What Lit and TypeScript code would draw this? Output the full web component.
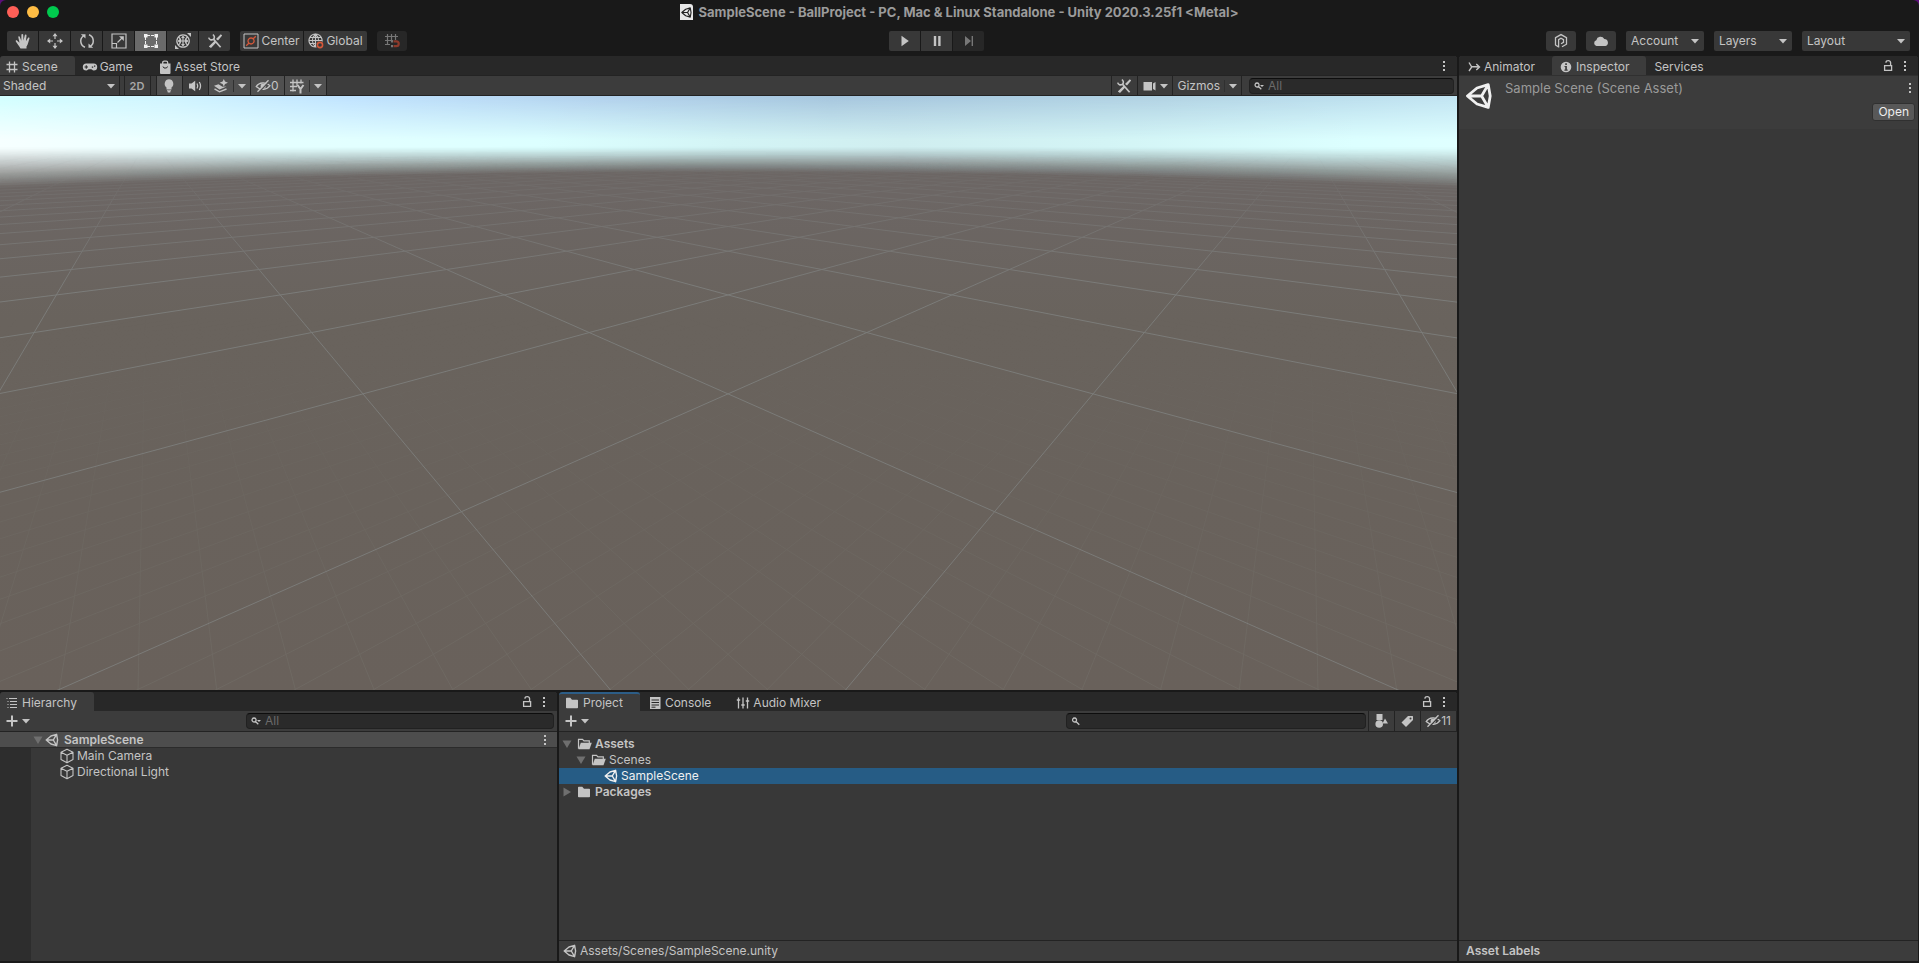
import { html, css, svg, nothing, LitElement, TemplateResult } from 'lit'
import { customElement, property } from 'lit/decorators.js'
import { classMap } from 'lit/directives/class-map.js'

const icons: Record<string, TemplateResult> = {
    hand: svg`<path d="M5.5 15.5C4 12.5 2 10.500.8 8.400c-.4-.9.8-1.400 1.500-.7L4.500 9.800 3.300 4.300c-.2-1.200 1.300-1.500 1.600-.3L6.300 7.800 6.400 1.800c0-1.200 1.700-1.200 1.800 0L8.500 7.600 9.800 2.300c.3-1.100 1.800-.8 1.700.4L10.900 8.200 12.900 5c.6-1 1.900-.3 1.500.7C13.400 8.500 13.200 11 11.500 13.500V15.500z"/>`,
    move: svg`<path fill="none" stroke="currentColor" stroke-width="1.2" d="M8 1.5V6M8 10v4.5M1.5 8H6M10 8h4.5"/>
        <path d="M8 0 10.5 3.2h-5zM8 16 5.5 12.8h5zM0 8 3.2 5.5v5zM16 8 12.8 10.5v-5z"/>`,
    rotate: svg`<path fill="none" stroke="currentColor" stroke-width="1.5" d="M6 14.2A6.5 6.5 0 0 1 4.5 2.8M10 1.8A6.5 6.5 0 0 1 11.5 13.2"/>
        <path d="M1.8 1.2H6.5V5.5zM14.2 14.8H9.5V10.5z"/>`,
    scale: svg`<path fill="none" stroke="currentColor" stroke-width="1.2" d="M1 1h14v14H1zM1 10.5h4.5V15M6.5 9.5 11.5 4.5"/>
        <path d="M8 3.2h4.8V8z"/>`,
    rect: svg`<path fill="none" stroke="currentColor" stroke-dasharray="3 1" d="M2.5 4v8M13.5 4v8M4 2.5h8M4 13.5h8"/>
        <path d="M1 1h3.5v3.5H1zM11.5 1H15v3.5h-3.5zM1 11.5h3.5V15H1zM11.5 11.5H15V15h-3.5z"/>`,
    transform: svg`<path fill="none" stroke="currentColor" stroke-width="1.2" d="M8 1.8a6.2 6.2 0 1 0 .1 0zM3.5 3.8Q8 8 3.5 12.2M12.5 3.8Q8 8 12.5 12.2M8 3.5v9M3.5 8h9"/>
        <path d="M8 2.5 10 5H6zM8 13.5 6 11h4zM2.5 8 5 6v4zM13.5 8 11 10V6zM12 0h4v4zM0 12v4h4z"/>`,
    tools: svg`<path fill="none" stroke="currentColor" stroke-width="1.7" d="M6 5.6 13.6 14.2"/>
        <path fill="none" stroke="currentColor" stroke-width="1.6" d="M5.8 1.6a3 3 0 0 1 1 4.4M1.700 4.600a3 3 0 0 0 4.500 1.800"/>
        <path d="M13.8 1.2 15.2 2.6 11 7.4 9 6zM7.600 7.800 9.400 9.200 4 14.900 1.800 13.400z"/>`,
    pivot: svg`<path fill="none" stroke="currentColor" d="M1 1h14v14H1z"/>
        <path fill="none" stroke="#d4583a" stroke-width="1.3" d="M8 5a3 3 0 1 0 .1 0zM10.2 5.8 12.8 3.2M5.8 10.2 3.2 12.8"/>`,
    globe: svg`<path fill="none" stroke="currentColor" stroke-width="1.2" d="M7.5 1a6.5 6.5 0 1 0 .1 0zM7.5 1C3.5 5 3.5 10 7.5 14M7.5 1C11.5 5 11.5 10 7.5 14M7.5 1v13M1 7.5h13M2 4.5h11M2 10.5h8"/>
        <circle cx="12" cy="12" r="4" fill="#383838"/><circle cx="12" cy="12" r="2.6" fill="none" stroke="#d4583a" stroke-width="1.6"/>`,
    snap: svg`<path fill="none" stroke="currentColor" stroke-width="1.2" d="M3.5 1v11M7.5 1v8M11.5 1v6M1 3.5h13M1 7.5h8M1 11.5h5"/>
        <path fill="none" stroke="#8d3a2b" stroke-width="2.2" d="M9.5 8.3h2.8a2.4 2.4 0 0 1 0 4.9H9.5"/>
        <path d="M7 7.2h2v2.2H7zM7 12.1h2v2.2H7z"/>`,
    play: svg`<path d="M4.5 2.8v10.4L11.8 8z"/>`,
    pause: svg`<path d="M4.8 3h2.4v10H4.8zM9.2 3h2.4v10H9.2z"/>`,
    step: svg`<path d="M4 3v10l6-5zM10.6 3H12v10h-1.4z"/>`,
    collab: svg`<path fill="none" stroke="currentColor" stroke-width="1.3" d="M5.6 14 2.5 12V4.700L8 1.600l5.500 3.100v6.500L9 13.800M5.600 14.500V6.600L8 5.200l2.500 1.400v2.800L8 10.800"/>`,
    cloud: svg`<path d="M3.500 13A3 3 0 0 1 3.300 7.200 4.300 4.300 0 0 1 11.300 6 3.600 3.600 0 0 1 12.500 13z"/>`,
    hash: svg`<path fill="none" stroke="currentColor" stroke-width="1.3" d="M5.5 2.5v11M10.5 2.5v11M2.5 5.5h11M2.5 10.5h11"/>`,
    game: svg`<path d="M4.3 4.5h7.4a3.5 3.5 0 0 1 0 7C10.2 11.5 10 10.3 9.3 10.3H6.7C6 10.3 5.8 11.5 4.3 11.5a3.5 3.5 0 0 1 0-7z"/>
        <path fill="#282828" d="M2.5 7.4h1.2V6.2h1.1V7.4H6v1.1H4.8v1.2H3.7V8.5H2.5zM9.8 7.4h1.4v1.4H9.8zM12 6.4h1.3v1.3H12z"/>`,
    bag: svg`<path d="M3 4.5h10.5V14q0 1-1 1H4q-1 0-1-1z"/>
        <path fill="none" stroke="currentColor" stroke-width="1.3" d="M5.7 5V3.7q0-1.5 1.5-1.5h2q1.5 0 1.5 1.5V5"/>
        <path fill="none" stroke="#282828" d="M6 7.5 7 9h2.5l1-1.5"/>`,
    bulb: svg`<path d="M8 1.3a4.5 4.5 0 0 1 2.500 8.100V11.500h-5V9.400A4.500 4.500 0 0 1 8 1.300zM6 12.300h4v1H9.300v1.200H6.700v-1.200H6z"/>`,
    audio: svg`<path d="M2 5.5h2.5L8.2 2.8v10.4L4.5 10.5H2z"/>
        <path fill="none" stroke="currentColor" stroke-width="1.3" d="M10 5.5q1.5 2.5 0 5M12.300 4q2.500 4 0 8"/>`,
    effects: svg`<path d="M1 7.8 5.500 6.200 9.500 8.800 13.500 8.600 6.500 11.600z"/>
        <path fill="none" stroke="currentColor" stroke-width="1.4" d="M1.500 10.800 6.500 13.800 13.500 11"/>
        <path d="M10.800 1 12 3.600 15 4.800 12 6 10.800 8.600 9.600 6 6.600 4.800 9.600 3.600z"/>`,
    eye: svg`<path fill="none" stroke="currentColor" stroke-width="1.3" d="M1.2 8.500C4 4.200 11 3.600 15 7.600 12 12 5.500 12.600 1.200 8.500z"/>
        <circle cx="8.2" cy="8.1" r="2.6"/>
        <path fill="none" stroke="var(--iconBack, #3c3c3c)" stroke-width="1.5" d="M3.500 14.500 14.500 3.200"/>
        <path fill="none" stroke="currentColor" stroke-width="1.3" d="M2.500 13.800 13.500 2.200"/>`,
    gridY: svg`<path fill="none" stroke="currentColor" stroke-width="1.3" d="M4 1.5v12M8 1.5v6M12 1.5v4M1 4.5h13.5M1 8.5h7M1 12.5h6"/>
        <path fill="none" stroke="currentColor" stroke-width="2" d="M8.5 7 11.5 11 14.500 7M11.500 11v4.500"/>`,
    camera: svg`<path d="M1.5 4H10v8.5H1.5zM13.5 4v8.500L11 11V5.500z"/>`,
    search: svg`<path fill="none" stroke="currentColor" stroke-width="1.3" d="M5.500 5a2 2 0 1 0 .1 0zM7 8.500 10.300 11.800"/>`,
    searchMenu: svg`<path fill="none" stroke="currentColor" stroke-width="1.3" d="M5 5a2 2 0 1 0 .1 0zM6.500 8.500 9.300 11.300"/>
        <path d="M8 7h4L10 9z"/>`,
    dots: svg`<path d="M7 3h2v2H7zM7 7h2v2H7zM7 11h2v2H7z"/>`,
    lock: svg`<path fill="none" stroke="currentColor" stroke-width="1.3" d="M3.600 7.600h7v4.800h-7zM5 4.800V4.300Q5 2.600 7.200 2.600T9.600 4.600V7.600"/>`,
    arrow: svg`<path d="M4 6h8l-4 4.500z"/>`,
    fold: svg`<path d="M3.500 4.500h9L8 12z"/>`,
    foldClosed: svg`<path d="M4.500 3.500v9L12 8z"/>`,
    plus: svg`<path d="M7 2.500h2V7h4.500v2H9v4.500H7V9H2.500V7H7z"/>`,
    list: svg`<path fill="none" stroke="currentColor" stroke-width="1.100" d="M2.500 3.500h1M5 3.500h8M3.500 6.500h1M6 6.500h7M3.500 9.500h1M6 9.500h7M3.500 12.500h1M6 12.500h7"/>`,
    logo: svg`<path fill="none" stroke="currentColor" stroke-width="1.400" stroke-linejoin="round" d="M2.200 8 7 4 12.600 2.300 13.600 8 12.600 13.700 7 12zM2.200 8H9.300L12.600 2.300M9.300 8 12.600 13.700"/>`,
    cube: svg`<path fill="none" stroke="currentColor" stroke-width="1.100" stroke-linejoin="round" d="M8 1.200 14 4.200v7.300L8 14.800 2 11.500V4.200zM2 4.200 8 7.300l6-3.100M8 7.300v7.500"/>`,
    folder: svg`<path d="M1 3.500q0-.8.800-.8H5.300L7 4.700h5.200q.8 0 .8.800V12.500q0 .8-.8.800H1.800q-.8 0-.8-.8z"/>`,
    folderOpen: svg`<path d="M3.800 6.800H14.800L12.500 13.300H1.500z"/>
        <path fill="none" stroke="currentColor" stroke-width="1.200" d="M1.500 12.800V3.300H5.500L7 4.800h5.300V7"/>`,
    console: svg`<path d="M3 2h10.5v12H3z"/><path fill="none" stroke="#282828" d="M4.500 5h7.500M4.500 7.500h7.500M4.500 10h7.500M4.500 12.200h4"/>`,
    mixer: svg`<path fill="none" stroke="currentColor" stroke-width="1.300" d="M3.500 2.500v11M8 2.500v11M12.500 2.500v11M1.800 5h3.400M6.300 10h3.400M10.800 6h3.400"/>`,
    shapes: svg`<path d="M3.500 1H9.500V7H3.500zM12 5.500l3 5H9.500z"/><circle cx="6.200" cy="11" r="3.800"/>`,
    tag: svg`<path d="M9 3h4.500q.5 0 .5.500V7L7 14 2.500 9.500z"/><circle cx="11.500" cy="5.500" r="1" fill="#3c3c3c"/>`,
    animator: svg`<path fill="none" stroke="currentColor" stroke-width="1.400" d="M3 3.500 5.500 7.500 13.500 8M3 12l3-4.300M10.300 5 13.500 8l-3.200 3"/>`,
    info: svg`<circle cx="8" cy="8" r="5.300"/><path fill="#3c3c3c" d="M7.200 4.300h1.700v1.700H7.200zM6.500 7h2.400v3.500h.8v1.200H6.400v-1.200h.8V8.100h-.7z"/>`,
}

@customElement('u-icon')
export class UIcon extends LitElement {
    static styles = css`
        :host {
            display: inline-flex;
            flex: none;
            width: 16px;
            height: 16px;
        }
        .icon {
            width: 100%;
            height: 100%;
            fill: currentColor;
        }
    `
    @property({ type: String })
    name = ''

    render() {
        return html`<svg class="icon" viewBox="0 0 16 16" aria-hidden="true">${icons[this.name] ?? nothing}</svg>`
    }
}

@customElement('scene-view')
export class SceneView extends LitElement {
    static styles = css`
        :host {
            display: block;
            min-height: 0;
            overflow: hidden;
            background: #69625c;
        }
        .canvas {
            display: block;
            width: 100%;
            height: 100%;
        }
        .major {
            stroke: #8a9090;
            stroke-width: 1;
        }
        .minor {
            stroke: #8a9088;
            stroke-width: 1;
        }
    `

    // The floor is seen in perspective: every line of one direction runs to
    // the same vanishing point, 579 units left or right of the centre.
    gridLine(n: number, side: number) {
        const centre = 728
        const horizon = 42
        const vanish = 579
        const depth = 0.003908 + 0.002464 * n
        const drop = 560
        const x = vanish * (1 - depth * drop)
        return svg`<line x1=${centre + side * vanish} y1=${horizon} x2=${centre + side * x} y2=${horizon + drop} />`
    }

    gridLines(from: number, to: number, step: number) {
        const lines = []
        for (let i = from; i <= to; i++) {
            if (step < 1 && i % 10 === 0) continue
            lines.push(this.gridLine(i * step, 1), this.gridLine(i * step, -1))
        }
        return lines
    }

    // thin curved layers that add up to a solid ground
    haze() {
        const layers = []
        const count = 32
        let before = 0
        for (let i = 1; i <= count; i++) {
            const t = i / count
            const total = Math.pow(t, 1.2)
            const alpha = i === count ? 1 : (total - before) / (1 - before)
            const edge = 50 + t * 41
            const top = 50 + t * 26
            layers.push(svg`<path fill="#6c6664" fill-opacity=${alpha.toFixed(4)}
                d="M0 ${edge}Q728 ${2 * top - edge} 1457 ${edge}V594H0z" />`)
            before = total
        }
        return layers
    }

    render() {
        return html`
        <svg class="canvas" viewBox="0 0 1457 594" preserveAspectRatio="none" role="img" aria-label="Scene view">
            <defs>
                <linearGradient id="skyTop">
                    <stop offset="0" stop-color="#d2ffff"/>
                    <stop offset=".12" stop-color="#cff4ff"/>
                    <stop offset=".24" stop-color="#c0e3ff"/>
                    <stop offset=".4" stop-color="#b3d2ee"/>
                    <stop offset=".57" stop-color="#a6c6de"/>
                    <stop offset=".8" stop-color="#b2d3e4"/>
                    <stop offset="1" stop-color="#c2e5f3"/>
                </linearGradient>
                <linearGradient id="skyLow">
                    <stop offset="0" stop-color="#f6ffff"/>
                    <stop offset=".2" stop-color="#e4ffff"/>
                    <stop offset=".37" stop-color="#dcffff"/>
                    <stop offset=".5" stop-color="#d3f4f5"/>
                    <stop offset=".62" stop-color="#d0eef0"/>
                    <stop offset=".76" stop-color="#d3f4f5"/>
                    <stop offset=".93" stop-color="#dcffff"/>
                    <stop offset="1" stop-color="#dfffff"/>
                </linearGradient>
                <linearGradient id="down" x2="0" y2="1">
                    <stop offset="0" stop-color="#000"/>
                    <stop offset="1" stop-color="#fff"/>
                </linearGradient>
                <linearGradient id="far" gradientUnits="userSpaceOnUse" x1="0" y1="60" x2="0" y2="594">
                    <stop offset="0" stop-color="#000"/>
                    <stop offset=".05" stop-color="#222"/>
                    <stop offset=".25" stop-color="#8c8c8c"/>
                    <stop offset="1" stop-color="#8c8c8c"/>
                </linearGradient>
                <linearGradient id="near" gradientUnits="userSpaceOnUse" x1="0" y1="220" x2="0" y2="594">
                    <stop offset="0" stop-color="#000"/>
                    <stop offset="1" stop-color="#2c2c2c"/>
                </linearGradient>
                <linearGradient id="ground" x2="0" y2="1">
                    <stop offset="0" stop-color="#6c6664"/>
                    <stop offset=".25" stop-color="#69635d"/>
                    <stop offset="1" stop-color="#69615b"/>
                </linearGradient>
                <mask id="skyMask"><rect width="1457" height="44" fill="url(#down)"/><rect y="44" width="1457" height="60" fill="#fff"/></mask>
                <mask id="farMask" maskUnits="userSpaceOnUse" x="0" y="0" width="1457" height="594"><rect width="1457" height="594" fill="url(#far)"/></mask>
                <mask id="nearMask" maskUnits="userSpaceOnUse" x="0" y="0" width="1457" height="594"><rect width="1457" height="594" fill="url(#near)"/></mask>
            </defs>
            <rect width="1457" height="104" fill="url(#skyTop)"/>
            <rect width="1457" height="104" fill="url(#skyLow)" mask="url(#skyMask)"/>
            ${this.haze()}
            <rect y="100" width="1457" height="494" fill="url(#ground)"/>
            <g class="major" mask="url(#farMask)">${this.gridLines(-6, 24, 1)}</g>
            <g class="minor" mask="url(#nearMask)">${this.gridLines(-40, 30, 0.1)}</g>
        </svg>
        `
    }
}

@customElement('app-root')
export class AppRoot extends LitElement {
    static styles = css`
        :host {
            display: block;
            height: 100vh;
            background: #5a0f78;
            color: #c4c4c4;
            font: 12px/16px Inter, "Liberation Sans", sans-serif;
            overflow: hidden;
        }
        * {
            box-sizing: border-box;
        }
        button, input, select {
            margin: 0;
            padding: 0;
            border: 0;
            font: inherit;
            color: inherit;
            background: none;
            border-radius: 0;
            outline: none;
        }
        button {
            display: inline-flex;
            align-items: center;
            justify-content: center;
            white-space: nowrap;
        }
        .window {
            display: flex;
            flex-direction: column;
            height: 100%;
            padding: 0 1px 2px 0;
            background: #191919;
            border-radius: 6px 6px 0 0;
            overflow: hidden;
        }
        .titlebar {
            display: grid;
            grid-template-columns: 1fr auto 1fr;
            align-items: center;
            height: 24px;
            flex: none;
        }
        .lights {
            display: flex;
            gap: 8px;
            padding-left: 7px;
        }
        .light {
            width: 12px;
            height: 12px;
            border-radius: 50%;
            background: #ff5f57;
        }
        .light.min {
            background: #ffbd44;
        }
        .light.max {
            background: #00ca4e;
        }
        .title {
            display: flex;
            align-items: center;
            gap: 6px;
            margin: 0;
            font-size: 13px;
            font-weight: 700;
            color: #9b9b9b;
        }
        .doc {
            display: flex;
            align-items: center;
            width: 13px;
            height: 16px;
            background: #e8e8e8;
            border-radius: 0 3px 0 0;
            color: #222;
        }
        .doc u-icon {
            width: 13px;
            height: 13px;
        }
        .toolbar {
            display: grid;
            grid-template-columns: 1fr auto 1fr;
            align-items: center;
            height: 32px;
            padding: 4px 8px 2px 7px;
            flex: none;
        }
        .tools, .right {
            display: flex;
            align-items: center;
            gap: 10px;
        }
        .right {
            justify-content: flex-end;
        }
        .group {
            display: flex;
            gap: 1px;
            border-radius: 2px;
            overflow: hidden;
        }
        .group.playback {
            margin-right: 44px;
        }
        .tool {
            width: 31px;
            height: 20px;
            background: #383838;
        }
        .tool.on {
            background: #6a6a6a;
            color: #f2f2f2;
        }
        .tool.off {
            background: #272727;
            color: #777;
        }
        .tool.solo {
            width: 30px;
            border-radius: 3px;
        }
        .tool.text {
            width: 63px;
            gap: 2px;
        }
        .drop {
            display: grid;
            align-items: center;
            width: 78px;
            height: 20px;
            background: #383838;
            border-radius: 2px;
        }
        .drop.wide {
            width: 108px;
        }
        .drop select, .drop u-icon {
            grid-area: 1 / 1;
        }
        .drop select {
            appearance: none;
            width: 100%;
            height: 100%;
            padding: 0 20px 0 5px;
        }
        .drop u-icon {
            justify-self: end;
            margin-right: 1px;
            pointer-events: none;
        }
        .drop.flat {
            width: 119px;
            background: none;
        }
        .drop.flat select {
            padding-left: 3px;
        }
        .drop.flat u-icon {
            margin-right: 0;
        }
        .main {
            display: grid;
            grid-template-columns: minmax(0, 1457fr) minmax(300px, 459fr);
            gap: 2px;
            flex: 1;
            min-height: 0;
        }
        .left {
            display: grid;
            grid-template-rows: minmax(0, 634fr) minmax(0, 269fr);
            gap: 2px;
            min-height: 0;
        }
        .lower {
            display: grid;
            grid-template-columns: minmax(0, 557fr) minmax(0, 898fr);
            gap: 2px;
            min-height: 0;
        }
        .panel {
            display: flex;
            flex-direction: column;
            min-height: 0;
            background: #383838;
            border-radius: 3px 3px 0 0;
            overflow: hidden;
        }
        .tabs {
            display: flex;
            align-items: flex-end;
            height: 19px;
            flex: none;
            background: #282828;
        }
        .tab {
            gap: 2px;
            height: 19px;
            padding: 0 17px 0 7px;
            border-top: 2px solid transparent;
        }
        .tab.active {
            padding-left: 6px;
            background: #3c3c3c;
            border-radius: 3px 3px 0 0;
        }
        .tab.edge {
            padding-left: 4px;
        }
        .tab.focus {
            border-top-color: #2c5d87;
        }
        .tab.plain {
            padding: 0 8px;
        }
        .spacer {
            flex: 1;
        }
        .tabs .end {
            display: flex;
            align-items: center;
            height: 19px;
            margin-left: auto;
            padding-right: 5px;
        }
        .bar {
            display: flex;
            align-items: center;
            height: 21px;
            flex: none;
            background: #3c3c3c;
            border-bottom: 1px solid #232323;
        }
        .scene .bar {
            border-top: 1px solid #232323;
        }
        .scene scene-view {
            flex: 1;
        }
        .cell {
            height: 100%;
            padding: 0 5px 0 4px;
            border-right: 1px solid #232323;
        }
        .cell.on {
            background: #505050;
            --iconBack: #505050;
        }
        .cell.menu {
            padding-right: 0;
        }
        .cell.first {
            border-left: 1px solid #232323;
        }
        .cell.bold {
            width: 26px;
            font-weight: 600;
            font-size: 11px;
            color: #a8a8a8;
        }
        .cell.gap {
            width: 6px;
            padding: 0;
        }
        .cell .close {
            margin-left: -2px;
        }
        .rule {
            width: 1px;
            height: 12px;
            margin-left: 4px;
            background: #303030;
        }
        .search {
            display: flex;
            align-items: center;
            height: 16px;
            padding: 0 2px;
            background: #2a2a2a;
            border: 1px solid #212121;
            border-top-color: #0d0d0d;
            border-radius: 4px;
        }
        .search input {
            flex: 1;
            min-width: 0;
            height: 14px;
        }
        .search input::placeholder {
            color: #6b6b6b;
            opacity: 1;
        }
        .search.short {
            width: 205px;
            margin: 0 3px 0 7px;
        }
        .search.half {
            width: 308px;
            margin-right: 3px;
        }
        .search.mid {
            width: 300px;
            margin-right: 2px;
        }
        .add {
            padding-left: 4px;
        }
        .add .more {
            margin-left: -2px;
        }
        .tree {
            flex: 1;
            margin: 0;
            padding: 0;
            list-style: none;
            overflow: hidden;
        }
        .hierarchy .tree {
            background: linear-gradient(90deg, #2d2d2d 31px, #383838 31px);
        }
        .project .tree {
            padding-top: 4px;
        }
        .row {
            display: flex;
            align-items: center;
            height: 16px;
            gap: 2px;
            white-space: nowrap;
        }
        .row.scene-row {
            background: #4d4d4d;
            border-bottom: 1px solid #2b2b2b;
            gap: 4px;
            padding-left: 30px;
        }
        .row.scene-row .fold {
            margin-right: -6px;
        }
        .row.scene-row .more {
            margin-left: auto;
            padding-right: 4px;
        }
        .row.object {
            padding-left: 59px;
        }
        .row.bold, .row.scene-row {
            font-weight: 600;
        }
        .row.selected {
            background: #265c85;
            color: #f0f0f0;
        }
        .row.child {
            padding-left: 14px;
        }
        .row.leaf {
            padding-left: 44px;
        }
        .fold {
            color: #6f6f6f;
        }
        .status {
            display: flex;
            align-items: center;
            gap: 2px;
            height: 21px;
            flex: none;
            padding-left: 3px;
            background: #3c3c3c;
            border-top: 1px solid #232323;
        }
        .labels {
            padding-left: 7px;
            font-weight: 600;
        }
        .header {
            display: flex;
            align-items: flex-start;
            height: 54px;
            flex: none;
            background: #3c3c3c;
            border-top: 1px solid #303030;
        }
        .header .big {
            width: 32px;
            height: 32px;
            margin: 4px 10px 0 4px;
            color: #f0f0f0;
        }
        .header h2 {
            margin: 4px 0 0;
            font-size: 13px;
            font-weight: 400;
            color: #9a9a9a;
            white-space: nowrap;
        }
        .actions {
            display: flex;
            flex-direction: column;
            align-items: flex-end;
            gap: 7px;
            margin-left: auto;
            padding: 4px 0 0;
        }
        .open {
            height: 18px;
            margin-right: 3px;
            padding: 0 5px;
            background: #585858;
            border: 1px solid #303030;
            border-radius: 3px;
            color: #eee;
        }
        .body {
            flex: 1;
        }
    `

    tab(label: string, icon: string, state: Record<string, boolean> = {}) {
        return html`
        <button role="tab" aria-selected=${!!state.active} class=${classMap({ tab: true, plain: !icon, ...state })}>
            ${icon ? html`<u-icon name=${icon}></u-icon>` : nothing}<span>${label}</span>
        </button>`
    }

    tabEnd(lock = true) {
        return html`
        <div class="end">
            ${lock ? html`<button aria-label="Lock"><u-icon name="lock"></u-icon></button>` : nothing}
            <button aria-label="Panel menu"><u-icon name="dots"></u-icon></button>
        </div>`
    }

    tool(name: string, label: string, state = '') {
        return html`<button class="tool ${state}" aria-label=${label}><u-icon name=${name}></u-icon></button>`
    }

    drop(label: string, type = '') {
        return html`
        <div class="drop ${type}">
            <select aria-label=${label}><option>${label}</option></select>
            <u-icon name="arrow"></u-icon>
        </div>`
    }

    search(label: string, type: string, icon = 'searchMenu', placeholder = 'All') {
        return html`
        <label class="search ${type}">
            <u-icon name=${icon}></u-icon>
            <input type="text" aria-label=${label} placeholder=${placeholder}>
        </label>`
    }

    renderToolbar() {
        return html`
        <div class="toolbar">
            <div class="tools">
                <div class="group">
                    ${this.tool('hand', 'Hand')}
                    ${this.tool('move', 'Move')}
                    ${this.tool('rotate', 'Rotate')}
                    ${this.tool('scale', 'Scale')}
                    ${this.tool('rect', 'Rect', 'on')}
                    ${this.tool('transform', 'Transform')}
                    ${this.tool('tools', 'Custom tools')}
                </div>
                <div class="group">
                    <button class="tool text"><u-icon name="pivot"></u-icon>Center</button>
                    <button class="tool text"><u-icon name="globe"></u-icon>Global</button>
                </div>
                ${this.tool('snap', 'Grid snapping', 'off solo')}
            </div>
            <div class="group playback">
                ${this.tool('play', 'Play')}
                ${this.tool('pause', 'Pause')}
                ${this.tool('step', 'Step', 'off')}
            </div>
            <div class="right">
                ${this.tool('collab', 'Collaborate', 'solo')}
                ${this.tool('cloud', 'Cloud services', 'solo')}
                ${this.drop('Account')}
                ${this.drop('Layers')}
                ${this.drop('Layout', 'wide')}
            </div>
        </div>`
    }

    renderScene() {
        return html`
        <section class="panel scene">
            <div class="tabs" role="tablist">
                ${this.tab('Scene', 'hash', { active: true, edge: true })}
                ${this.tab('Game', 'game')}
                ${this.tab('Asset Store', 'bag')}
                ${this.tabEnd(false)}
            </div>
            <div class="bar">
                ${this.drop('Shaded', 'flat')}
                <div class="cell gap first"></div>
                <button class="cell bold">2D</button>
                <div class="cell gap"></div>
                <button class="cell on" aria-label="Lighting"><u-icon name="bulb"></u-icon></button>
                <button class="cell" aria-label="Audio"><u-icon name="audio"></u-icon></button>
                <button class="cell on menu" aria-label="Effects">
                    <u-icon name="effects"></u-icon><span class="rule"></span><u-icon name="arrow"></u-icon>
                </button>
                <button class="cell on" aria-label="Hidden objects"><u-icon name="eye"></u-icon>0</button>
                <button class="cell on menu" aria-label="Grid">
                    <u-icon name="gridY"></u-icon><span class="rule"></span><u-icon name="arrow"></u-icon>
                </button>
                <div class="spacer"></div>
                <button class="cell first" aria-label="Component tools"><u-icon name="tools"></u-icon></button>
                <button class="cell menu" aria-label="Camera"><u-icon name="camera"></u-icon><u-icon class="close" name="arrow"></u-icon></button>
                <button class="cell menu">Gizmos<span class="rule"></span><u-icon name="arrow"></u-icon></button>
                ${this.search('Search scene', 'short')}
            </div>
            <scene-view></scene-view>
        </section>`
    }

    renderHierarchy() {
        return html`
        <section class="panel hierarchy">
            <div class="tabs" role="tablist">
                ${this.tab('Hierarchy', 'list', { active: true, edge: true })}
                ${this.tabEnd()}
            </div>
            <div class="bar">
                <button class="add" aria-label="Create"><u-icon name="plus"></u-icon><u-icon class="more" name="arrow"></u-icon></button>
                <div class="spacer"></div>
                ${this.search('Search hierarchy', 'half')}
            </div>
            <ul class="tree">
                <li class="row scene-row">
                    <u-icon class="fold" name="fold"></u-icon><u-icon name="logo"></u-icon>SampleScene
                    <button class="more" aria-label="Scene menu"><u-icon name="dots"></u-icon></button>
                </li>
                ${['Main Camera', 'Directional Light'].map(name => html`
                    <li class="row object"><u-icon name="cube"></u-icon>${name}</li>
                `)}
            </ul>
        </section>`
    }

    renderProject() {
        return html`
        <section class="panel project">
            <div class="tabs" role="tablist">
                ${this.tab('Project', 'folder', { active: true, focus: true })}
                ${this.tab('Console', 'console')}
                ${this.tab('Audio Mixer', 'mixer')}
                ${this.tabEnd()}
            </div>
            <div class="bar">
                <button class="add" aria-label="Create"><u-icon name="plus"></u-icon><u-icon class="more" name="arrow"></u-icon></button>
                <div class="spacer"></div>
                ${this.search('Search project', 'mid', 'search', '')}
                <button class="cell first" aria-label="Search by type"><u-icon name="shapes"></u-icon></button>
                <button class="cell" aria-label="Search by label"><u-icon name="tag"></u-icon></button>
                <button class="cell" aria-label="Hidden packages"><u-icon name="eye"></u-icon>11</button>
            </div>
            <ul class="tree">
                <li class="row bold"><u-icon class="fold" name="fold"></u-icon><u-icon name="folderOpen"></u-icon>Assets</li>
                <li class="row child"><u-icon class="fold" name="fold"></u-icon><u-icon name="folderOpen"></u-icon>Scenes</li>
                <li class="row leaf selected"><u-icon name="logo"></u-icon>SampleScene</li>
                <li class="row bold"><u-icon class="fold" name="foldClosed"></u-icon><u-icon name="folder"></u-icon>Packages</li>
            </ul>
            <footer class="status"><u-icon name="logo"></u-icon>Assets/Scenes/SampleScene.unity</footer>
        </section>`
    }

    renderInspector() {
        return html`
        <section class="panel inspector">
            <div class="tabs" role="tablist">
                ${this.tab('Animator', 'animator')}
                ${this.tab('Inspector', 'info', { active: true })}
                ${this.tab('Services', '')}
                ${this.tabEnd()}
            </div>
            <header class="header">
                <u-icon class="big" name="logo"></u-icon>
                <h2>Sample Scene (Scene Asset)</h2>
                <div class="actions">
                    <button aria-label="Asset menu"><u-icon name="dots"></u-icon></button>
                    <button class="open">Open</button>
                </div>
            </header>
            <div class="body"></div>
            <footer class="status labels">Asset Labels</footer>
        </section>`
    }

    render() {
        return html`
        <div class="window">
            <header class="titlebar">
                <div class="lights">
                    <button class="light" aria-label="Close"></button>
                    <button class="light min" aria-label="Minimize"></button>
                    <button class="light max" aria-label="Zoom"></button>
                </div>
                <h1 class="title">
                    <span class="doc"><u-icon name="logo"></u-icon></span>
                    SampleScene - BallProject - PC, Mac &amp; Linux Standalone - Unity 2020.3.25f1 &lt;Metal&gt;
                </h1>
            </header>
            ${this.renderToolbar()}
            <main class="main">
                <div class="left">
                    ${this.renderScene()}
                    <div class="lower">
                        ${this.renderHierarchy()}
                        ${this.renderProject()}
                    </div>
                </div>
                ${this.renderInspector()}
            </main>
        </div>
        `
    }
}

declare global {
    interface HTMLElementTagNameMap {
        'app-root': AppRoot
        'scene-view': SceneView
        'u-icon': UIcon
    }
}
